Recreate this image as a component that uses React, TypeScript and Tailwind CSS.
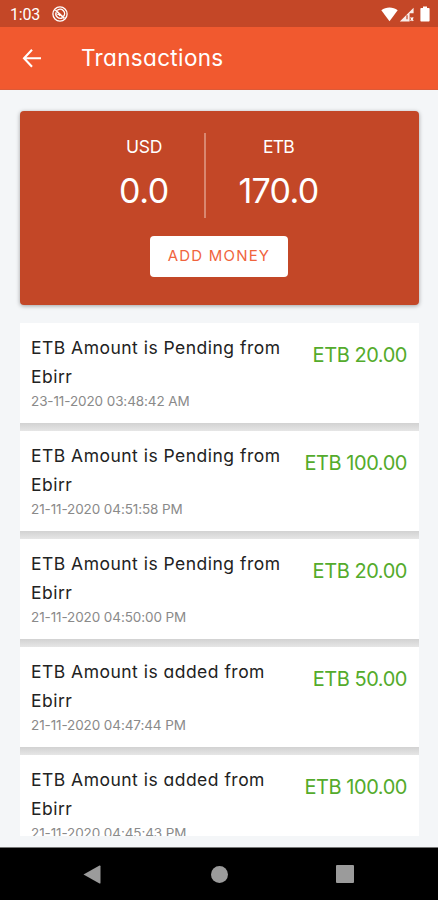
type Transaction = {
  title: string
  date: string
  amount: string
}

const transactions: Transaction[] = [
  { title: 'ETB Amount is Pending from Ebirr', date: '23-11-2020 03:48:42 AM', amount: 'ETB 20.00' },
  { title: 'ETB Amount is Pending from Ebirr', date: '21-11-2020 04:51:58 PM', amount: 'ETB 100.00' },
  { title: 'ETB Amount is Pending from Ebirr', date: '21-11-2020 04:50:00 PM', amount: 'ETB 20.00' },
  { title: 'ETB Amount is added from Ebirr', date: '21-11-2020 04:47:44 PM', amount: 'ETB 50.00' },
  { title: 'ETB Amount is added from Ebirr', date: '21-11-2020 04:45:43 PM', amount: 'ETB 100.00' },
]

function StatusBar() {
  return (
    <div className="flex h-[27px] shrink-0 items-center bg-[#c44727] pl-[10px] pr-[8px] pt-[1px] text-white">
      <span className="w-[42px] pt-[1px] font-[Roboto] text-[16px] leading-none tracking-[-0.2px]">1:03</span>
      <svg className="h-4 w-4" viewBox="0 0 16 16" fill="none" stroke="currentColor">
        <circle cx="8" cy="8" r="7.1" strokeWidth="1.3" />
        <path d="M5.2 4.6a4.2 4.2 0 0 1 6.2 5.8M10.6 11.6a4.4 4.4 0 0 1-6.4-5.4" strokeWidth="1.4" />
        <path d="M3.4 4l9 8.4" strokeWidth="1.6" />
        <path d="M5.4 8.6c1-.6 2-.2 2.6 1.4" strokeWidth="1.4" />
      </svg>
      <svg className="ml-auto h-[15px] w-[17px]" viewBox="0 0 17 15" fill="currentColor">
        <path d="M0.3 3.2C5 -0.5 12 -0.5 16.7 3.2L8.5 14.3z" />
      </svg>
      <svg className="ml-[1px] h-[15px] w-[16px]" viewBox="0 0 16 15">
        <path d="M0.8 14.5L14.6 0.8V6.2H10.6V14.5z" fill="currentColor" fillOpacity="0.9" />
        <path d="M8 8.2v4" stroke="#c44727" strokeWidth="1.2" />
        <path d="M11.6 10.4l2.6 3.4M14.2 10.4l-2.6 3.4" stroke="currentColor" strokeWidth="1.2" />
      </svg>
      <svg className="ml-[5px] h-[16px] w-[10px]" viewBox="0 0 10 16" fill="currentColor">
        <path d="M3 0.5h4v1.6h1.6c.6 0 1 .4 1 1v11.4c0 .6-.4 1-1 1H1.4c-.6 0-1-.4-1-1V3.1c0-.6.4-1 1-1H3z" />
      </svg>
    </div>
  )
}

function AppBar() {
  return (
    <header className="flex h-[63px] shrink-0 items-center border-b border-[#dd5a37] bg-[#f1592f] pl-[22px] text-white">
      <svg className="h-5 w-5" viewBox="0 0 20 20" fill="none" stroke="currentColor" strokeWidth="2.1">
        <path d="M10 1.8L2 10.3l8 8.5M2 10.3h17" />
      </svg>
      <h1 className="ml-[39px] text-[22.5px] leading-none tracking-[0.35px]">Transactions</h1>
    </header>
  )
}

function BalanceCard() {
  return (
    <section className="flex h-[194px] shrink-0 flex-col items-center rounded-[4px] bg-[#c34727] pt-[22px] text-white shadow-[0_1px_4px_rgba(0,0,0,0.35)]">
      <div className="flex h-[85px] pr-[3px]">
        <div className="flex w-[119px] flex-col items-center pt-[4px]">
          <span className="text-[17.5px] leading-5 tracking-[-0.3px]">USD</span>
          <span className="mt-[14px] text-[34px] leading-10 tracking-[-0.3px]">0.0</span>
        </div>
        <div className="w-[2px] bg-[#d98770]" />
        <div className="flex w-[146px] flex-col items-center pt-[4px]">
          <span className="text-[17.5px] leading-5 tracking-[-0.8px]">ETB</span>
          <span className="mt-[14px] text-[34px] leading-10 tracking-[-0.7px]">170.0</span>
        </div>
      </div>
      <button className="mr-[1px] mt-[18px] h-[41px] w-[138px] rounded-[4px] bg-white text-[15px] tracking-[1.2px] text-[#f0643d]">
        ADD MONEY
      </button>
    </section>
  )
}

function TransactionRow({ title, date, amount }: Transaction) {
  return (
    <li className="flex h-[108px] shrink-0 flex-col">
      <div className="flex flex-1 justify-between bg-white pl-[11px] pr-[12px] pt-[10px]">
        <div className="w-[265px]">
          <p className="text-[17.5px] leading-[29px] tracking-[0.48px] text-[#222]">{title}</p>
          <p className="mt-[1px] text-[13.5px] leading-[18px] tracking-[-0.1px] text-[#8a8a8a]">{date}</p>
        </div>
        <p className="whitespace-nowrap pt-[8px] text-[20px] leading-[29px] tracking-[-0.45px] text-[#54ab2c]">
          {amount}
        </p>
      </div>
      <div className="h-[8px] bg-linear-to-b from-[#d2d2d2] to-[#e6e6e6]" />
    </li>
  )
}

function NavigationBar() {
  return (
    <nav className="flex h-[53px] shrink-0 items-center border-t border-[#777] bg-black text-[#9b9b9b]">
      <svg className="ml-[83px] h-[19px] w-[18px]" viewBox="0 0 18 19" fill="currentColor">
        <path d="M0.5 9.5L16.5 0.5q1-.3 1 .8v16.4q0 1.1-1 .8z" />
      </svg>
      <div className="ml-[110px] h-[17px] w-[17px] rounded-full bg-current" />
      <div className="ml-[108px] h-[18px] w-[18px] rounded-[1px] bg-current" />
    </nav>
  )
}

export default function App() {
  return (
    <div className="flex h-[900px] w-[438px] flex-col overflow-hidden bg-[#f4f6f8] font-[Inter,sans-serif] [font-feature-settings:'cv11']">
      <StatusBar />
      <AppBar />
      <main className="flex min-h-0 flex-1 flex-col pb-[11px] pl-[20px] pr-[19px] pt-[21px]">
        <BalanceCard />
        <ul className="mt-[18px] flex min-h-0 flex-1 flex-col overflow-hidden">
          {transactions.map(item => (
            <TransactionRow key={item.date} {...item} />
          ))}
        </ul>
      </main>
      <NavigationBar />
    </div>
  )
}
